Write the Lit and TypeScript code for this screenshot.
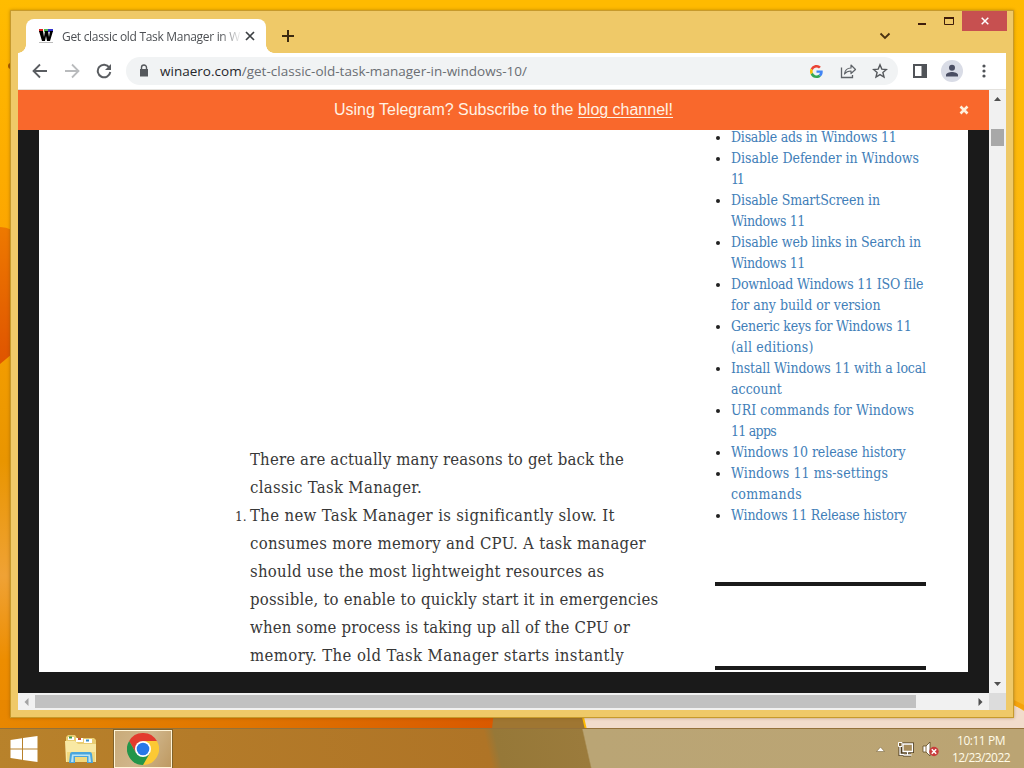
import {LitElement, html, css, svg} from 'lit';
import {customElement, property} from 'lit/decorators.js';

@customElement('fit-text')
export class FitText extends LitElement {
  @property({type: Number}) width = 0;

  static styles = css`
    :host {
      display: block;
      white-space: pre;
      width: max-content;
    }
  `;

  protected firstUpdated() {
    const chars = (this.textContent ?? '').length;
    const natural = this.getBoundingClientRect().width;
    if (this.width && chars) {
      this.style.letterSpacing = `${(this.width - natural) / chars}px`;
    }
  }

  protected render() {
    return html`<slot></slot>`;
  }
}

type Line = [string, number];

const paragraph: Line[] = [
  ['There are actually many reasons to get back the', 374],
  ['classic Task Manager.', 172],
];

const reasons: Line[] = [
  ['The new Task Manager is significantly slow. It', 364.5],
  ['consumes more memory and CPU. A task manager', 396],
  ['should use the most lightweight resources as', 354.5],
  ['possible, to enable to quickly start it in emergencies', 408.5],
  ['when some process is taking up all of the CPU or', 380],
  ['memory. The old Task Manager starts instantly', 374],
];

const links: Line[][] = [
  [['Disable ads in Windows 11', 165.5]],
  [['Disable Defender in Windows', 188], ['11', 11.5]],
  [['Disable SmartScreen in', 149], ['Windows 11', 74]],
  [['Disable web links in Search in', 190], ['Windows 11', 74]],
  [['Download Windows 11 ISO file', 192], ['for any build or version', 149.5]],
  [['Generic keys for Windows 11', 180.5], ['(all editions)', 82.5]],
  [['Install Windows 11 with a local', 195], ['account', 51]],
  [['URI commands for Windows', 183], ['11 apps', 45]],
  [['Windows 10 release history', 174.5]],
  [['Windows 11 ms-settings', 157], ['commands', 71]],
  [['Windows 11 Release history', 175.5]],
];

const lines = (items: Line[]) =>
  items.map(([text, width]) => html`<fit-text .width=${width}>${text}</fit-text>`);

const wallpaper = svg`
  <defs>
    <linearGradient id="left" x1="0" y1="0" x2="0" y2="1">
      <stop offset="0" stop-color="#ffbc00"/>
      <stop offset=".33" stop-color="#fca400"/>
      <stop offset=".6" stop-color="#e99500"/>
      <stop offset=".75" stop-color="#efa235"/>
      <stop offset=".86" stop-color="#ed8d00"/>
      <stop offset="1" stop-color="#e88600"/>
    </linearGradient>
    <linearGradient id="red" x1="0" y1="0" x2="0" y2="1">
      <stop offset="0" stop-color="#ee7900"/>
      <stop offset="1" stop-color="#df5400"/>
    </linearGradient>
    <linearGradient id="right" x1="0" y1="0" x2="0" y2="1">
      <stop offset="0" stop-color="#ffba00"/>
      <stop offset="1" stop-color="#f7b52a"/>
    </linearGradient>
    <linearGradient id="floor" x1="0" y1="0" x2="1" y2="0">
      <stop offset="0" stop-color="#e88700"/>
      <stop offset=".5" stop-color="#df7400"/>
      <stop offset="1" stop-color="#d95800"/>
    </linearGradient>
  </defs>
  <rect width="1024" height="768" fill="#ffba00"/>
  <rect width="30" height="768" fill="url(#left)"/>
  <path d="M0 227q6 0 12 3v124L0 364z" fill="url(#red)"/>
  <circle cx="11" cy="66" r="3" fill="#a55a00"/>
  <path d="M0 700h500v68H0z" fill="url(#floor)"/>
  <path d="M495 700h83l16 68H488z" fill="#9f7632"/>
  <path d="M580 700h444v68H596z" fill="#f2dccb"/>
  <path d="M1000 0h24v711l-24-15z" fill="url(#right)"/>
  <path d="M1000 693l24 12v5L1000 699z" fill="#f5a30b"/>
`;

@customElement('app-root')
export class AppRoot extends LitElement {
  static styles = css`
    :host {
      display: block;
      position: relative;
      width: 1024px;
      height: 768px;
      overflow: hidden;
      font-family: "Open Sans", "Noto Sans", sans-serif;
    }

    * {
      box-sizing: border-box;
    }

    svg {
      display: block;
      flex: none;
    }

    .wallpaper {
      position: absolute;
      inset: 0;
    }

    .window {
      position: absolute;
      left: 10px;
      top: 10px;
      width: 1004px;
      height: 708px;
      padding: 0 7px 7px;
      display: flex;
      flex-direction: column;
      background: #efc968;
      border: 1px solid #c79a2c;
      box-shadow: 0 0 3px rgba(110, 70, 0, 0.45);
    }

    .titlebar {
      height: 42px;
      flex: none;
      display: flex;
      align-items: flex-start;
    }

    .tab {
      position: relative;
      width: 240px;
      height: 34px;
      margin: 8px 0 0 8px;
      padding: 0 10px 0 12px;
      display: flex;
      align-items: center;
      background: #fff;
      border-radius: 8px 8px 0 0;
    }

    .tab::before,
    .tab::after {
      content: "";
      position: absolute;
      bottom: 0;
      width: 8px;
      height: 8px;
    }

    .tab::before {
      left: -8px;
      background: radial-gradient(circle at 0 0, transparent 7.5px, #fff 8px);
    }

    .tab::after {
      right: -8px;
      background: radial-gradient(circle at 100% 0, transparent 7.5px, #fff 8px);
    }

    .tab-title {
      flex: 1;
      margin-left: 8px;
      font-size: 12px;
      color: #4d5054;
      -webkit-mask-image: linear-gradient(90deg, #000 158px, transparent 180px);
    }

    .new-tab {
      margin: 18px 0 0 15px;
    }

    .chevron {
      margin: 20px 0 0 auto;
    }

    .minimize {
      margin: 12px 0 0 27px;
    }

    .maximize {
      margin: 6px 0 0 18px;
    }

    .close {
      width: 45px;
      height: 20px;
      margin-left: 8px;
      margin-right: -1px;
      display: grid;
      place-items: center;
      background: #c75050;
    }

    .toolbar {
      height: 37px;
      flex: none;
      display: flex;
      align-items: center;
      padding: 0 14px;
      background: #fff;
      border-bottom: 1px solid #e4e2de;
    }

    .back,
    .forward {
      margin-right: 16px;
    }

    .reload {
      margin-right: 14px;
    }

    .omnibox {
      width: 772px;
      height: 28px;
      padding: 0 10px 0 10px;
      display: flex;
      align-items: center;
      border-radius: 14px;
      background: #f1f3f4;
    }

    .url {
      margin: 0 auto 0 8px;
      font-size: 13.5px;
      color: #6a6e73;
    }

    .host {
      color: #26272b;
    }

    .share {
      margin-left: 17px;
    }

    .star {
      margin-left: 15px;
    }

    .panel {
      margin-left: 14px;
    }

    .avatar {
      margin-left: 13px;
    }

    .menu {
      margin: 0 0 0 auto;
    }

    .body {
      flex: 1;
      min-height: 0;
      display: grid;
      grid-template-columns: 971px 17px;
      grid-template-rows: 603px 17px;
      background: #f1f1f1;
    }

    .page {
      overflow: hidden;
      display: flex;
      flex-direction: column;
      background: #1a1a1a;
    }

    .banner {
      height: 40px;
      flex: none;
      padding-right: 20px;
      display: flex;
      align-items: center;
      justify-content: space-between;
      background: #f9682c;
      color: #fff2e4;
      font: 16px "Liberation Sans", Arial, sans-serif;
    }

    .banner-text {
      margin-left: 316px;
    }

    .banner-text u {
      text-decoration-thickness: 1px;
      text-underline-offset: 2px;
    }

    .sheet {
      width: 929px;
      height: 542px;
      margin-left: 21px;
      overflow: hidden;
      display: flex;
      background: #fff;
      font-family: "DejaVu Serif Condensed", "DejaVu Serif", serif;
      font-stretch: condensed;
    }

    .article {
      width: 676px;
      padding: 316px 0 0 211px;
      font-size: 16.6px;
      line-height: 28px;
      color: #383838;
    }

    .reason {
      display: flex;
      margin-left: -20px;
    }

    .number {
      width: 20px;
      padding-left: 5px;
      font-size: 13.5px;
    }

    .links {
      width: 211px;
      padding: 0;
      margin: -3px 0 0;
      list-style: none;
      font-size: 14px;
      line-height: 21px;
      color: #417eb8;
    }

    .link {
      display: flex;
    }

    .link::before {
      content: "";
      width: 4px;
      height: 4px;
      margin: 9px 11px 0 1px;
      border-radius: 50%;
      background: #222;
    }

    .rule {
      width: 211px;
      height: 4px;
      margin-top: 56px;
      background: #1a1a1a;
    }

    .rule + .rule {
      margin-top: 80px;
    }

    .vbar {
      display: flex;
      flex-direction: column;
      align-items: center;
      padding: 7px 0;
    }

    .vthumb {
      width: 13px;
      height: 17px;
      margin: 28px 0 auto;
      background: #a8a8a8;
    }

    .hbar {
      display: flex;
      align-items: center;
      padding: 0 6px;
    }

    .hthumb {
      width: 881px;
      height: 13px;
      margin: 0 auto 0 6px;
      background: #c1c1c1;
    }

    .corner {
      background: #dcdcdc;
    }

    .taskbar {
      position: absolute;
      left: 0;
      right: 0;
      bottom: 0;
      height: 40px;
      padding: 0 13px 0 10px;
      display: flex;
      align-items: center;
      background: linear-gradient(77.3deg, #b8822b 0, #b47b29 200px, #af7426 480px, #967838 490px, #9b7b3c 576px, #baa575 577.5px, #bba473 100%);
      border-top: 1px solid #94713a;
    }

    .explorer {
      margin-left: 26px;
    }

    .chrome {
      width: 60px;
      height: 40px;
      margin-left: 15px;
      display: grid;
      place-items: center;
      background: linear-gradient(120deg, #c9aa78, #d0b68b 50%, #bd9860);
      border: 1px solid #806129;
      box-shadow: inset 0 0 0 1px #fff4d6;
    }

    .tray-arrow {
      margin-left: auto;
    }

    .network {
      margin-left: 12px;
    }

    .sound {
      margin-left: 7px;
    }

    .clock {
      width: 60px;
      margin-left: 12px;
      display: flex;
      flex-direction: column;
      align-items: center;
      color: #fffbe8;
      font-size: 12px;
      line-height: 17px;
    }
  `;

  private renderTitlebar() {
    return html`
      <div class="titlebar">
        <div class="tab">
          <svg width="16" height="16" viewBox="0 0 16 16">
            <path d="M1 1h4v3H1z" fill="#d22"/><path d="M6 1h4v3H6z" fill="#5b5"/><path d="M10 1h5v3h-5z" fill="#33c"/>
            <path d="M1 3h4l1 6 1-6h3l1 6 1-6h3l-3 10H9L8 8l-1 5H4z" fill="#000"/>
            <path d="M1 14.5h14" stroke="#bbb"/>
          </svg>
          <div class="tab-title"><fit-text .width=${178}>Get classic old Task Manager in W</fit-text></div>
          <svg width="12" height="12" viewBox="0 0 12 12"><path d="M2 2l8 8M10 2l-8 8" stroke="#3c4043" stroke-width="1.7"/></svg>
        </div>
        <svg class="new-tab" width="14" height="14" viewBox="0 0 14 14"><path d="M7 1v12M1 7h12" stroke="#3c2a10" stroke-width="2"/></svg>
        <svg class="chevron" width="12" height="10" viewBox="0 0 12 10"><path d="M1.5 2.5L6 7l4.5-4.5" fill="none" stroke="#4a3210" stroke-width="1.8"/></svg>
        <svg class="minimize" width="8" height="2"><path d="M0 1h8" stroke="#3f1d0b" stroke-width="2"/></svg>
        <svg class="maximize" width="10" height="8"><path d="M.5 1v6.5h9V1" fill="none" stroke="#3f1d0b"/><path d="M0 1h10" stroke="#3f1d0b" stroke-width="2"/></svg>
        <div class="close"><svg width="8" height="8" viewBox="0 0 8 8"><path d="M.7.7l6.6 6.6M7.3.7L.7 7.3" stroke="#fff" stroke-width="1.5"/></svg></div>
      </div>
    `;
  }

  private renderToolbar() {
    return html`
      <div class="toolbar">
        <svg class="back" width="16" height="16" viewBox="0 0 16 16"><path d="M15 8H2M8 1.500L1.500 8 8 14.500" fill="none" stroke="#5a5d61" stroke-width="1.8"/></svg>
        <svg class="forward" width="16" height="16" viewBox="0 0 16 16"><path d="M1 8h13M8 1.500L14.500 8 8 14.500" fill="none" stroke="#b9bbbd" stroke-width="1.8"/></svg>
        <svg class="reload" width="16" height="16" viewBox="0 0 16 16"><path d="M13.300 4.500A6.300 6.300 0 1 0 14.300 9" fill="none" stroke="#5a5d61" stroke-width="2"/><path d="M15 1v6H9z" fill="#5a5d61"/></svg>
        <div class="omnibox">
          <svg width="16" height="16" viewBox="0 0 16 16"><path d="M4 6h8v7.500H4z" fill="#55585c"/><path d="M5.500 6.500V4.500a2.500 2.500 0 0 1 5 0v2" fill="none" stroke="#55585c" stroke-width="1.4"/></svg>
          <div class="url"><fit-text .width=${367}><span class="host">winaero.com</span>/get-classic-old-task-manager-in-windows-10/</fit-text></div>
          <svg width="13" height="13" viewBox="0 0 48 48">
            <path fill="#ea4335" d="M24 9.500c3.500 0 6.700 1.200 9.200 3.600l6.900-6.900A24 24 0 0 0 2.600 13.200l8 6.200C12.400 13.700 17.700 9.500 24 9.500z"/>
            <path fill="#4285f4" d="M47 24.600c0-1.600-.2-3.100-.4-4.600H24v9h12.900a11 11 0 0 1-4.700 7.200l7.700 6C44.400 38 47 31.800 47 24.600z"/>
            <path fill="#fbbc05" d="M10.500 28.600a14.500 14.500 0 0 1 0-9.200l-8-6.200a24 24 0 0 0 0 21.600z"/>
            <path fill="#34a853" d="M24 48c6.500 0 11.900-2.100 15.900-5.800l-7.700-6A14.500 14.500 0 0 1 10.500 28.600l-8 6.200A24 24 0 0 0 24 48z"/>
          </svg>
          <svg class="share" width="17" height="16" viewBox="0 0 17 16"><path d="M1.500 4.500v10h11v-2.500" fill="none" stroke="#5f6368" stroke-width="1.3"/><path d="M4.500 11c.5-4 3-6 6.500-6V2l4.500 4.500L11 10.500V8c-3 0-5 1-6.500 3z" fill="none" stroke="#5f6368" stroke-width="1.2" stroke-linejoin="round"/></svg>
          <svg class="star" width="16" height="16" viewBox="0 0 16 16"><path d="M8 1.800l1.800 4.300 4.600.4-3.500 3 1.100 4.500L8 11.600 4 14l1.100-4.500-3.500-3 4.600-.4z" fill="none" stroke="#55585c" stroke-width="1.4"/></svg>
        </div>
        <svg class="panel" width="16" height="16" viewBox="0 0 16 16"><path d="M1 1h14v14H1z" fill="#505358"/><path d="M3 3h6.500v10H3z" fill="#fff"/></svg>
        <svg class="avatar" width="22" height="22" viewBox="0 0 22 22"><circle cx="11" cy="11" r="11" fill="#d9dce6"/><circle cx="11" cy="7.800" r="3" fill="#4a4e63"/><path d="M5 16.500V15c0-2 3.500-3 6-3s6 1 6 3v1.500z" fill="#4a4e63"/></svg>
        <svg class="menu" width="16" height="16" viewBox="0 0 16 16"><g fill="#505358"><circle cx="8" cy="3" r="1.600"/><circle cx="8" cy="8" r="1.600"/><circle cx="8" cy="13" r="1.600"/></g></svg>
      </div>
    `;
  }

  private renderPage() {
    return html`
      <div class="page">
        <div class="banner">
          <div class="banner-text"><fit-text .width=${339}>Using Telegram? Subscribe to the <u>blog channel!</u></fit-text></div>
          <svg width="10" height="10" viewBox="0 0 10 10"><path d="M1.500 1.500l7 7M8.500 1.500l-7 7" stroke="#fff0dc" stroke-width="2.6"/></svg>
        </div>
        <div class="sheet">
          <div class="article">
            ${lines(paragraph)}
            <div class="reason"><div class="number">1.</div><div>${lines(reasons)}</div></div>
          </div>
          <div class="side">
            <ul class="links">
              ${links.map((item) => html`<li class="link"><div>${lines(item)}</div></li>`)}
            </ul>
            <div class="rule"></div>
            <div class="rule"></div>
          </div>
        </div>
      </div>
    `;
  }

  private renderTaskbar() {
    return html`
      <div class="taskbar">
        <svg width="28" height="26" viewBox="0 0 28 26"><path d="M.5 4L12 2.300V12.500H.5zM13 2.100L27.500 0v12.500H13zM.5 13.500H12v10.200L.5 22zM13 13.500h14.500V26L13 23.900z" fill="#fff"/></svg>
        <svg class="explorer" width="34" height="30" viewBox="0 0 34 30">
          <path d="M2 3l2-2h7l2 3h17l2 2v22H2z" fill="#e9cd72"/>
          <path d="M4 3h6v3H4z" fill="#fff"/><path d="M5 2.500h3v2H5z" fill="#3a9a4a"/>
          <path d="M12 4h7v4h-7z" fill="#fff"/><path d="M14 4h3v2h-3z" fill="#c8553a"/>
          <path d="M20 5h8v4h-8z" fill="#fff"/><path d="M22 5.500h3v2h-3z" fill="#3b8fc4"/>
          <path d="M1 7h10l3 3h18v18H2z" fill="#f9e9a4"/>
          <path d="M3 18h28v10H3z" fill="#f2d97f"/>
          <path d="M5 29l1-9q.3-2 2-2h18q1.700 0 2 2l1 9h-6v-6H11v6z" fill="#4ba6dc"/>
          <path d="M7 28l1-7.500h18l1 7.500h-2.500v-6h-15v6z" fill="#b9e3f6"/>
        </svg>
        <div class="chrome">
          <svg width="32" height="32" viewBox="0 0 32 32">
            <path d="M16 16L2.140 8A16 16 0 0 1 29.860 8z" fill="#e33b2e"/>
            <path d="M16 16L29.860 8A16 16 0 0 1 16 32z" fill="#fcc934"/>
            <path d="M16 8h13.860L22.930 20z" fill="#fcc934"/>
            <path d="M9.070 20L2.140 8 16 8z" fill="#e33b2e"/>
            <path d="M2.140 8L9.070 20H22.930L16 32A16 16 0 0 1 2.140 8z" fill="#24954a"/>
            <circle cx="16" cy="16" r="8" fill="#fff"/>
            <circle cx="16" cy="16" r="6.300" fill="#2878e8"/>
          </svg>
        </div>
        <svg class="tray-arrow" width="9" height="6" viewBox="0 0 9 6"><path d="M.5 5.500L4.500 1l4 4.500z" fill="#fff" stroke="#7d6a43" stroke-width=".6"/></svg>
        <svg class="network" width="18" height="16" viewBox="0 0 18 16">
          <g fill="none" stroke="#4d3b1d" stroke-width="3"><path d="M6 3h9.500v7.500H6zM10.500 10v4M6 14h8M3 2v11.500h4"/></g>
          <path d="M6 3h9.500v7.500H6z" fill="#a78c5c"/>
          <path d="M6 3h9.500v7.500H6zM10.500 10v4M6.500 14h8M3 6v7.500h4" fill="none" stroke="#fff" stroke-width="1.3"/>
          <path d="M1.500 1.500H5v4H1.500z" fill="#7b6337" stroke="#fff"/>
        </svg>
        <svg class="sound" width="17" height="16" viewBox="0 0 17 16">
          <path d="M1 5h3l4-4v14l-4-4H1z" fill="#fff" stroke="#5e4a25" stroke-width=".8"/><path d="M4 5v6" stroke="#8b7349"/>
          <circle cx="12" cy="10.500" r="4.700" fill="#c93c3c"/><path d="M9.800 8.300l4.400 4.400M14.200 8.300l-4.400 4.400" stroke="#fff" stroke-width="1.5"/>
        </svg>
        <div class="clock">
          <fit-text .width=${48}>10:11 PM</fit-text>
          <fit-text .width=${58}>12/23/2022</fit-text>
        </div>
      </div>
    `;
  }

  protected render() {
    return html`
      <svg class="wallpaper" width="1024" height="768">${wallpaper}</svg>
      <div class="window">
        ${this.renderTitlebar()} ${this.renderToolbar()}
        <div class="body">
          ${this.renderPage()}
          <div class="vbar">
            <svg width="7" height="4"><path d="M0 4L3.500 0 7 4z" fill="#505050"/></svg>
            <div class="vthumb"></div>
            <svg width="7" height="4"><path d="M0 0h7L3.500 4z" fill="#505050"/></svg>
          </div>
          <div class="hbar">
            <svg width="5" height="8"><path d="M4.500 0v8L.5 4z" fill="#a3a3a3"/></svg>
            <div class="hthumb"></div>
            <svg width="5" height="8"><path d="M.5 0v8l4-4z" fill="#505050"/></svg>
          </div>
          <div class="corner"></div>
        </div>
      </div>
      ${this.renderTaskbar()}
    `;
  }
}
